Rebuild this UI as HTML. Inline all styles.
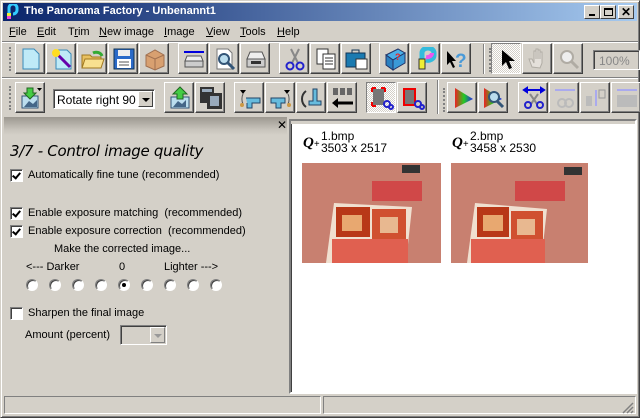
<!DOCTYPE html>
<html><head><meta charset="utf-8"><style>
*{margin:0;padding:0;box-sizing:border-box}
body{width:640px;height:418px;overflow:hidden;background:#d4d0c8;font-family:"Liberation Sans",Tahoma,sans-serif;font-size:11px;color:#000;position:relative}
.a{position:absolute}
.btn{position:absolute;width:30px;height:31px;border:1px solid;border-color:#fff #404040 #404040 #fff;box-shadow:inset -1px -1px 0 #808080;background:#d4d0c8}
.btn.p{border-color:#808080 #fff #fff #808080;box-shadow:none;background:repeating-conic-gradient(#fff 0 25%,#d4d0c8 0 50%) 0 0/2px 2px}
.btn svg{position:absolute;left:3px;top:3px}
.grip{position:absolute;width:3px;border-left:2px dotted #808080}
.cb{position:absolute;width:13px;height:13px;background:#fff;border:1px solid;border-color:#808080 #fff #fff #808080;box-shadow:inset 1px 1px 0 #404040}
.cb.c::after{content:"";position:absolute;left:3px;top:1px;width:3px;height:6px;border:solid #000;border-width:0 2px 2px 0;transform:rotate(40deg)}
.rd{position:absolute;width:12px;height:12px;border-radius:50%;background:#fff;border:1px solid;border-color:#808080 #fff #fff #808080;box-shadow:inset 1px 1px 0 #404040}
.rd.s::after{content:"";position:absolute;left:3px;top:3px;width:4px;height:4px;border-radius:50%;background:#000}
.t{position:absolute;white-space:nowrap}
</style></head><body>
<div class="a" style="left:0;top:0;width:640px;height:418px;border:1px solid;border-color:#d4d0c8 #404040 #404040 #d4d0c8;box-shadow:inset 1px 1px 0 #fff,inset -1px -1px 0 #808080"></div>
<div class="a" style="left:3px;top:3px;width:634px;height:18px;background:linear-gradient(90deg,#0a246a,#a6caf0)"></div>
<svg class="a" style="left:5px;top:4px" width="14" height="16"><path d="M4 14V4a4 4 0 0 1 8 0v2a4 4 0 0 1-4 4" stroke="#3cf" stroke-width="3" fill="none"/><rect x="2" y="9" width="4" height="6" fill="#ee3"/><rect x="2" y="12" width="4" height="3" fill="#e4d"/></svg>
<div class="t" style="left:24px;top:5px;color:#fff;font-weight:bold;font-size:11px">The Panorama Factory - Unbenannt1</div>
<div class="a" style="left:584px;top:5px;width:16px;height:14px;background:#d4d0c8;border:1px solid;border-color:#fff #404040 #404040 #fff"><div class="a" style="left:4px;top:8px;width:6px;height:2px;background:#000"></div></div>
<div class="a" style="left:600px;top:5px;width:16px;height:14px;background:#d4d0c8;border:1px solid;border-color:#fff #404040 #404040 #fff"><div class="a" style="left:3px;top:2px;width:9px;height:8px;border:1px solid #000;border-top-width:2px"></div></div>
<div class="a" style="left:618px;top:5px;width:16px;height:14px;background:#d4d0c8;border:1px solid;border-color:#fff #404040 #404040 #fff;font-weight:bold;font-size:12px;line-height:12px;text-align:center">✕</div>
<div class="t" style="left:9px;top:26px;font-size:11px">
<span style="position:absolute;left:0"><u>F</u>ile</span><span style="position:absolute;left:28px"><u>E</u>dit</span><span style="position:absolute;left:59px">T<u>r</u>im</span><span style="position:absolute;left:90px"><u>N</u>ew image</span><span style="position:absolute;left:155px"><u>I</u>mage</span><span style="position:absolute;left:197px"><u>V</u>iew</span><span style="position:absolute;left:231px"><u>T</u>ools</span><span style="position:absolute;left:268px"><u>H</u>elp</span></div>
<div class="a" style="left:2px;top:41px;width:636px;height:1px;background:#808080"></div><div class="a" style="left:2px;top:42px;width:636px;height:1px;background:#fff"></div>
<div class="grip" style="left:9px;top:47px;height:24px"></div>
<div class="a" style="left:2px;top:77px;width:636px;height:1px;background:#808080"></div><div class="a" style="left:2px;top:78px;width:636px;height:1px;background:#fff"></div>
<div class="grip" style="left:9px;top:86px;height:24px"></div>
<div class="a" style="left:483px;top:44px;width:2px;height:30px;border-left:1px solid #808080;border-right:1px solid #fff"></div>
<div class="grip" style="left:489px;top:48px;height:24px"></div>
<div class="a" style="left:437px;top:80px;width:2px;height:34px;border-left:1px solid #808080;border-right:1px solid #fff"></div>
<div class="grip" style="left:443px;top:88px;height:24px"></div>

<!-- toolbar 1 -->
<div class="btn" style="left:15px;top:43px"><svg width="24" height="24"><path d="M4 2h11l5 5v15H4z" fill="#bfeaf7" stroke="#3a8ab8"/></svg></div>
<div class="btn" style="left:46px;top:43px"><svg width="24" height="24"><path d="M6 3h11l4 4v15H6z" fill="#bfeaf7" stroke="#3a8ab8"/><path d="M4 4l16 16" stroke="#60a" stroke-width="3"/><circle cx="6" cy="6" r="4" fill="#fd2"/></svg></div>
<div class="btn" style="left:77px;top:43px"><svg width="24" height="24"><path d="M1 8h8l2 2h9v11H1z" fill="#e8c060" stroke="#a07820"/><path d="M4 12h19l-3 9H1z" fill="#f8e090" stroke="#a07820"/><path d="M12 6a6 5 0 0 1 9 3" stroke="#3a3" stroke-width="3" fill="none"/></svg></div>
<div class="btn" style="left:108px;top:43px"><svg width="24" height="24"><rect x="2" y="2" width="20" height="20" fill="#2a6ac8" stroke="#135"/><rect x="6" y="3" width="12" height="6" fill="#eee"/><rect x="5" y="12" width="14" height="9" fill="#fff"/><path d="M7 15h10M7 18h10" stroke="#555"/></svg></div>
<div class="btn" style="left:139px;top:43px"><svg width="24" height="24"><path d="M3 8l9-5 9 5v11l-9 4-9-4z" fill="#d8a070" stroke="#a07050"/><path d="M3 8l9 4 9-4M12 12v11" stroke="#a07050" fill="none"/></svg></div>
<div class="btn" style="left:178px;top:43px"><svg width="24" height="24"><path d="M2 5h20" stroke="#00d" stroke-width="2"/><path d="M3 14h18v6H3z" fill="#ccc" stroke="#555"/><path d="M5 9h14l2 5H3z" fill="#eee" stroke="#555"/></svg></div>
<div class="btn" style="left:209px;top:43px"><svg width="24" height="24"><path d="M4 2h11l4 4v16H4z" fill="#fff" stroke="#777"/><circle cx="11" cy="12" r="5" fill="#bde" stroke="#357" stroke-width="2"/><path d="M15 16l6 6" stroke="#357" stroke-width="3"/></svg></div>
<div class="btn" style="left:240px;top:43px"><svg width="24" height="24"><path d="M3 12h18v8H3z" fill="#ccc" stroke="#555"/><path d="M6 5h12l3 7H3z" fill="#eee" stroke="#555"/><rect x="7" y="14" width="10" height="3" fill="#333"/></svg></div>
<div class="btn" style="left:279px;top:43px"><svg width="24" height="24"><path d="M8 2l7 14M16 2L9 16" stroke="#888" stroke-width="2"/><circle cx="7" cy="19" r="3.5" fill="none" stroke="#22c" stroke-width="2"/><circle cx="17" cy="19" r="3.5" fill="none" stroke="#22c" stroke-width="2"/></svg></div>
<div class="btn" style="left:310px;top:43px"><svg width="24" height="24"><path d="M3 2h11v15H3z" fill="#fff" stroke="#333"/><path d="M9 7h12v15H9z" fill="#fff" stroke="#333"/><path d="M11 11h8M11 14h8M11 17h8" stroke="#333"/></svg></div>
<div class="btn" style="left:341px;top:43px"><svg width="24" height="24"><rect x="1" y="6" width="19" height="14" fill="#1a7ab0" stroke="#135"/><path d="M7 6V3h7v3" stroke="#135" fill="none"/><path d="M11 12h11v10H11z" fill="#fff" stroke="#333"/></svg></div>
<div class="btn" style="left:379px;top:43px"><svg width="24" height="24"><path d="M3 8l12-6 7 4-12 7z" fill="#4ab0e8" stroke="#236"/><path d="M3 8v10l7 5V13z" fill="#2a80c0" stroke="#236"/><path d="M10 13l12-7v10l-12 7z" fill="#3a9ad8" stroke="#236"/><text x="12" y="13" font-size="9" fill="#e22" font-weight="bold" font-family="Liberation Sans">?</text></svg></div>
<div class="btn" style="left:410px;top:43px"><svg width="24" height="24"><path d="M8 22V6a6 5 0 0 1 12 0v2a6 5 0 0 1-8 5" stroke="#3bd" stroke-width="5" fill="none"/><rect x="5" y="12" width="6" height="10" fill="#ee3" stroke="#333"/><path d="M12 10a5 4 0 0 0 6-4" stroke="#e5e" stroke-width="4" fill="none"/></svg></div>
<div class="btn" style="left:441px;top:43px"><svg width="24" height="24"><path d="M2 4l0 14 3-3 3 6 2-1-3-6h4z" fill="#000"/><text x="10" y="20" font-size="19" font-weight="bold" fill="#4a9ad8" font-family="Liberation Sans">?</text></svg></div>
<div class="btn p" style="left:491px;top:43px"><svg width="24" height="24"><path d="M7 3v16l4-4 3 7 3-1-3-7h6z" fill="#000"/></svg></div>
<div class="btn" style="left:522px;top:43px"><svg width="24" height="24"><path d="M6 20l-3-8 3 0 2 4V4h2v8V2h2v10V3h2v9V5h2v11l-2 5z" fill="#e4e0da" stroke="#b0aca4"/></svg></div>
<div class="btn" style="left:553px;top:43px"><svg width="24" height="24"><circle cx="10" cy="10" r="6" fill="#eee" stroke="#b0aca4" stroke-width="2"/><path d="M14 14l7 7" stroke="#b0aca4" stroke-width="3"/></svg></div>
<div class="a" style="left:593px;top:50px;width:47px;height:20px;border:1px solid;border-color:#808080 #fff #fff #808080;box-shadow:inset 1px 1px 0 #404040;color:#888;font-size:12px;padding:3px 0 0 5px">100%</div>

<!-- toolbar 2 -->
<div class="btn" style="left:15px;top:82px"><svg width="24" height="24"><rect x="3" y="10" width="16" height="12" fill="#bde" stroke="#357"/><path d="M5 21l5-6 4 3 4-4 0 7z" fill="#468"/><path d="M8 2h6v5h3l-6 6-6-6h3z" fill="#4c4" stroke="#262"/><path d="M18 2h5l-2.5 3z" fill="#000"/></svg></div>
<div class="a" style="left:53px;top:89px;width:102px;height:20px;background:#fff;border:1px solid;border-color:#808080 #fff #fff #808080;box-shadow:inset 1px 1px 0 #404040;font-size:12px;padding:3px 0 0 3px">Rotate right 90</div>
<div class="a" style="left:138px;top:91px;width:15px;height:16px;border:1px solid;border-color:#fff #404040 #404040 #fff;background:#d4d0c8"><div class="a" style="left:3px;top:6px;border:4px solid transparent;border-top:4px solid #000;border-bottom:0"></div></div>
<div class="btn" style="left:164px;top:82px"><svg width="24" height="24"><rect x="3" y="11" width="18" height="11" fill="#bde" stroke="#357"/><path d="M5 21l5-6 4 3 4-4 0 7z" fill="#468"/><path d="M9 13V8H5l7-7 7 7h-4v5z" fill="#4c4" stroke="#262"/></svg></div>
<div class="btn" style="left:195px;top:82px"><svg width="24" height="24"><rect x="1" y="1" width="14" height="16" fill="#333"/><rect x="8" y="7" width="15" height="16" fill="#333"/><rect x="11" y="10" width="9" height="10" fill="#9ab"/><rect x="3" y="3" width="10" height="3" fill="#9ab"/></svg></div>
<div class="btn" style="left:234px;top:82px"><svg width="24" height="24"><path d="M8 12h14v5H14v5H9v-5" fill="#6bd" stroke="#246"/><path d="M2 4h6L5 8z" fill="#000"/><path d="M5 8a5 8 0 0 0 0 10" stroke="#555" fill="none"/><circle cx="4" cy="19" r="2" fill="#c94"/></svg></div>
<div class="btn" style="left:265px;top:82px"><svg width="24" height="24"><path d="M2 12h14v5h-4v5H7v-5H2z" fill="#6bd" stroke="#246"/><path d="M15 4h6l-3 4z" fill="#000"/><path d="M19 8a5 8 0 0 1 0 10" stroke="#555" fill="none"/><circle cx="20" cy="19" r="2" fill="#c94"/></svg></div>
<div class="btn" style="left:296px;top:82px"><svg width="24" height="24"><path d="M6 5a10 10 0 0 0 0 16" stroke="#333" stroke-width="2" fill="none"/><path d="M13 3v12h-4v4h12v-4h-4V3z" fill="#6bd" stroke="#246"/></svg></div>
<div class="btn" style="left:327px;top:82px"><svg width="24" height="24"><rect x="2" y="2" width="5" height="7" fill="#666"/><rect x="9" y="2" width="5" height="7" fill="#666"/><rect x="16" y="2" width="5" height="7" fill="#666"/><path d="M3 17h19" stroke="#000" stroke-width="3"/><path d="M1 17l6-5v10z" fill="#000"/></svg></div>
<div class="btn p" style="left:366px;top:82px"><svg width="24" height="24"><rect x="3" y="3" width="11" height="16" fill="#777"/><path d="M2 2h4M2 2v4M15 2h-4M15 2v4M2 20h4M2 20v-4" stroke="#e00" stroke-width="2"/><circle cx="17" cy="18" r="3" fill="none" stroke="#22c" stroke-width="2"/><circle cx="21" cy="21" r="2" fill="none" stroke="#22c" stroke-width="2"/></svg></div>
<div class="btn" style="left:397px;top:82px"><svg width="24" height="24"><rect x="3" y="3" width="11" height="16" fill="#777" stroke="#e00" stroke-width="2"/><circle cx="17" cy="18" r="3" fill="none" stroke="#22c" stroke-width="2"/><circle cx="21" cy="21" r="2" fill="none" stroke="#22c" stroke-width="2"/></svg></div>
<div class="btn" style="left:447px;top:82px"><svg width="24" height="24"><defs><linearGradient id="g" x1="0" x2="1"><stop offset="0" stop-color="#e22"/><stop offset=".5" stop-color="#2c2"/><stop offset="1" stop-color="#22e"/></linearGradient></defs><path d="M4 2l18 11L4 22z" fill="url(#g)"/></svg></div>
<div class="btn" style="left:478px;top:82px"><svg width="24" height="24"><path d="M2 2l18 11L2 22z" fill="url(#g)"/><circle cx="12" cy="11" r="5" fill="#bde" stroke="#357" stroke-width="2"/><path d="M15 15l6 6" stroke="#357" stroke-width="3"/></svg></div>
<div class="btn" style="left:518px;top:82px"><svg width="24" height="24"><path d="M2 4h20M2 4l3-2v4zM22 4l-3-2v4z" stroke="#00d" stroke-width="2" fill="#00d"/><path d="M8 8l7 10M16 8l-7 10" stroke="#888" stroke-width="2"/><circle cx="6" cy="19" r="3" fill="none" stroke="#22c" stroke-width="2"/><circle cx="18" cy="19" r="3" fill="none" stroke="#22c" stroke-width="2"/></svg></div>
<div class="btn" style="left:549px;top:82px"><svg width="24" height="24"><path d="M2 4h20" stroke="#aae" stroke-width="2"/><circle cx="9" cy="17" r="4" fill="none" stroke="#bbb" stroke-width="2"/><circle cx="16" cy="17" r="4" fill="none" stroke="#bbb" stroke-width="2"/></svg></div>
<div class="btn" style="left:580px;top:82px"><svg width="24" height="24"><rect x="2" y="10" width="6" height="10" fill="#bbb"/><path d="M12 4v16" stroke="#aae" stroke-width="2"/><rect x="15" y="4" width="6" height="8" fill="none" stroke="#999"/></svg></div>
<div class="btn" style="left:611px;top:82px"><svg width="24" height="24"><path d="M2 4h20" stroke="#aae" stroke-width="2"/><rect x="2" y="9" width="20" height="12" fill="#bbb"/></svg></div>

<!-- left panel -->
<div class="a" style="left:4px;top:117px;width:283px;height:18px;background:linear-gradient(#9c9890,#c8c4bc 70%,#d4d0c8)"></div>
<div class="t" style="left:277px;top:118px;font-size:12px">✕</div>
<div class="t" style="left:10px;top:142px;font-size:15px;font-style:italic;font-family:'DejaVu Sans',sans-serif;letter-spacing:-0.3px">3/7 - Control image quality</div>
<div class="cb c" style="left:10px;top:169px"></div><div class="t" style="left:28px;top:169px">Automatically fine tune (recommended)</div>
<div class="cb c" style="left:10px;top:207px"></div><div class="t" style="left:28px;top:207px">Enable exposure matching&nbsp; (recommended)</div>
<div class="cb c" style="left:10px;top:225px"></div><div class="t" style="left:28px;top:225px">Enable exposure correction&nbsp; (recommended)</div>
<div class="t" style="left:54px;top:243px">Make the corrected image...</div>
<div class="t" style="left:26px;top:261px">&lt;--- Darker</div>
<div class="t" style="left:119px;top:261px">0</div>
<div class="t" style="left:164px;top:261px">Lighter ---&gt;</div>
<div class="rd" style="left:26px;top:279px"></div><div class="rd" style="left:49px;top:279px"></div><div class="rd" style="left:72px;top:279px"></div><div class="rd" style="left:95px;top:279px"></div><div class="rd s" style="left:118px;top:279px"></div><div class="rd" style="left:141px;top:279px"></div><div class="rd" style="left:164px;top:279px"></div><div class="rd" style="left:187px;top:279px"></div><div class="rd" style="left:210px;top:279px"></div>
<div class="cb" style="left:10px;top:307px"></div><div class="t" style="left:28px;top:307px">Sharpen the final image</div>
<div class="t" style="left:25px;top:329px">Amount (percent)</div>
<div class="a" style="left:120px;top:325px;width:47px;height:20px;border:1px solid;border-color:#808080 #fff #fff #808080;box-shadow:inset 1px 1px 0 #404040"></div>
<div class="a" style="left:150px;top:327px;width:15px;height:16px;border:1px solid;border-color:#fff #808080 #808080 #fff"><div class="a" style="left:3px;top:6px;border:4px solid transparent;border-top:4px solid #999;border-bottom:0"></div></div>

<!-- right panel -->
<div class="a" style="left:289px;top:119px;width:348px;height:275px;border:2px solid;border-color:#808080 #fff #fff #808080;box-shadow:inset 1px 1px 0 #404040;background:#fff"></div>
<div class="a" style="left:291px;top:121px;width:344px;height:3px;background:#d4d0c8"></div>
<div class="t" style="left:303px;top:135px;font-size:15px;font-style:italic;font-weight:bold;font-family:'Liberation Serif',serif">Q<span style="font-size:10px">+</span></div>
<div class="t" style="left:321px;top:130px;font-size:12px;line-height:12px">1.bmp<br>3503 x 2517</div>
<div class="t" style="left:452px;top:135px;font-size:15px;font-style:italic;font-weight:bold;font-family:'Liberation Serif',serif">Q<span style="font-size:10px">+</span></div>
<div class="t" style="left:470px;top:130px;font-size:12px;line-height:12px">2.bmp<br>3458 x 2530</div>
<svg class="a" style="left:302px;top:163px" width="139" height="100"><rect width="139" height="100" fill="#c88070"/><rect x="70" y="18" width="50" height="20" fill="#d04848"/><rect x="100" y="2" width="18" height="8" fill="#333"/><path d="M32 40l78 4-6 56H24z" fill="#f0e0d0"/><rect x="34" y="44" width="34" height="30" fill="#b83818"/><rect x="70" y="46" width="34" height="30" fill="#d05030"/><rect x="30" y="76" width="76" height="24" fill="#e06050"/><rect x="40" y="52" width="20" height="16" fill="#e8a870"/><rect x="78" y="54" width="18" height="16" fill="#e8b890"/></svg>
<svg class="a" style="left:451px;top:163px" width="137" height="100"><rect width="137" height="100" fill="#c88070"/><rect x="64" y="18" width="50" height="20" fill="#d04848"/><rect x="113" y="4" width="18" height="8" fill="#333"/><path d="M24 40l72 6-6 54H16z" fill="#f0e0d0"/><rect x="26" y="44" width="32" height="30" fill="#b83818"/><rect x="60" y="48" width="32" height="30" fill="#d05030"/><rect x="20" y="76" width="74" height="24" fill="#e06050"/><rect x="32" y="52" width="20" height="16" fill="#e8a870"/><rect x="66" y="56" width="18" height="16" fill="#e8b890"/></svg>

<!-- status bar -->
<div class="a" style="left:4px;top:396px;width:317px;height:18px;border:1px solid;border-color:#808080 #fff #fff #808080"></div>
<div class="a" style="left:323px;top:396px;width:313px;height:18px;border:1px solid;border-color:#808080 #fff #fff #808080"></div>
<svg class="a" style="left:622px;top:402px" width="12" height="12"><path d="M11 1L1 11M11 5L5 11M11 9L9 11" stroke="#808080" stroke-width="1.5"/></svg>
</body></html>
